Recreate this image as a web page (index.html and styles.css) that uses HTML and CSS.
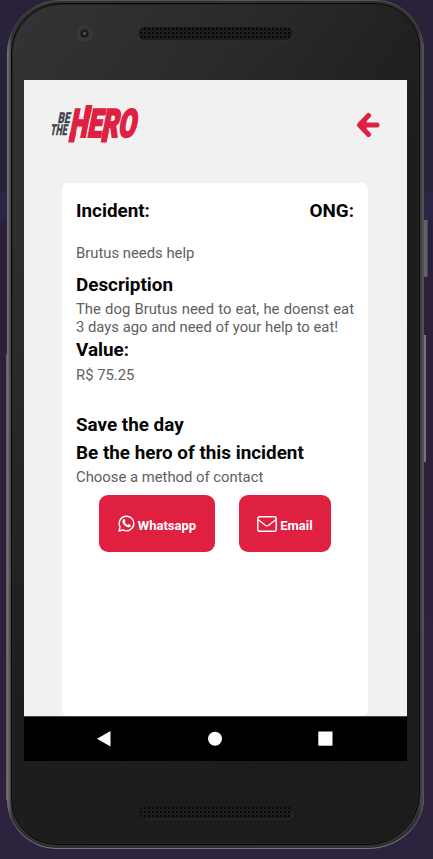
FILE: index.html
```html
<!DOCTYPE html>
<html lang="en">
<head>
<meta charset="utf-8">
<title>Be The Hero</title>
<link rel="stylesheet" href="styles.css">
</head>
<body>
<div class="phone">
  <i class="key power"></i><i class="key volume"></i><i class="key rail"></i>
  <div class="face">
    <div class="bezel top"><i class="camera"></i><i class="speaker"></i></div>
    <main class="screen">
      <header class="header">
        <svg class="logo" viewBox="0 0 90 42" role="img" aria-label="Be the Hero">
          <g transform="translate(0 34) skewX(-11)">
            <g class="small">
              <text x="4.500" y="-15.500" textLength="12" lengthAdjust="spacingAndGlyphs">BE</text>
              <text x="-.5" y="-3" textLength="16.500" lengthAdjust="spacingAndGlyphs">THE</text>
            </g>
            <g class="hero">
              <text x="18.500" y="-1" textLength="66.500" lengthAdjust="spacingAndGlyphs">HERO</text>
              <path d="M19-6h6V4.500h-6zM29.500-33h6.500V-20h-6.500zM51.500-8h6V4.500h-6z"/>
            </g>
          </g>
        </svg>
        <svg class="back" viewBox="0 0 24 26"><path d="M12.500 3.500 3.500 13l9 9.500M4.500 13H21" /><path class="fill" d="M4 13l6.500-6v12z"/></svg>
      </header>
      <section class="card">
        <div class="headings"><h2>Incident:</h2><h2>ONG:</h2></div>
        <p class="name"><span>Brutus needs help</span></p>
        <h2 class="desc-title">Description</h2>
        <p class="description">The dog Brutus need to eat, he doenst eat 3 days ago and need of your help to eat!</p>
        <h2 class="value-title">Value:</h2>
        <p class="value">R$ 75.25</p>
        <h2 class="save">Save the day</h2>
        <h2 class="be">Be the hero of this incident</h2>
        <p class="choose">Choose a method of contact</p>
        <div class="actions">
          <a class="button whatsapp">
            <svg width="17" height="17" viewBox="0 0 17 17"><path class="line" d="M1 16l1.100-4A7.300 7.300 0 1 1 5 14.900z"/><path class="solid" d="M5.500 4.300c.5-.5 1-.4 1.200.1l.7 1.500c.1.400-.5.900-.7 1.200.7 1.400 1.700 2.300 3.100 2.900l.9-1 1.900.9c.4.200.2 1-.1 1.500-.7.900-2 1-3.200.6-2.400-.8-4-2.500-4.800-4.600-.4-1.200.2-2.200 1-3.100z"/></svg>
            <span>Whatsapp</span>
          </a>
          <a class="button email">
            <svg width="20" height="16" viewBox="0 0 20 16"><rect class="line" x=".8" y=".8" width="18.400" height="14.400" rx="1.500"/><path class="line" d="M1 3.500c2.500 2 5 4 7.300 5.800q1.700 1.200 3.400 0C14 7.500 16.500 5.500 19 3.500"/></svg>
            <span>Email</span>
          </a>
        </div>
      </section>
      <nav class="navbar">
        <svg viewBox="0 0 383 44"><path d="M73 21.700 86.500 14v15.500z"/><circle cx="191" cy="21.700" r="7"/><rect x="294.300" y="14.500" width="14.200" height="14.200"/></svg>
      </nav>
    </main>
    <div class="bezel bottom"><i class="speaker"></i></div>
  </div>
</div>
</body>
</html>
```
FILE: styles.css
```css
* { box-sizing: border-box; }
body {
  margin: 0;
  height: 859px;
  overflow: hidden;
  font-family: Roboto, "Liberation Sans", sans-serif;
  background: linear-gradient(#29223a 0 192px, #2d2446 193px 220px, #2a2039 222px, #2d233f);
}
h2, p { margin: 0; }

.phone {
  position: relative;
  width: 417px;
  height: 849px;
  margin-left: 7px;
  padding: 3px 4px 4px 4px;
  border-radius: 54px 48px 56px 50px / 54px 52px 52px 50px;
  background: linear-gradient(90deg, #77777a 0, #5e5e60 2px, #303031 5px, #303031 411px, #3b3939 413px, #555 417px);
  box-shadow: inset 0 -1px #77757a, inset 0 1px #555;
}
.face {
  height: 842px;
  padding: 0 12px;
  border: 1px solid #090909;
  border-radius: 50px 45px 52px 46px;
  background: linear-gradient(125deg, #333435 0, #2a2a2a 25%, #1d1d1d 50%, #1c1c1d);
  box-shadow: inset 0 0 0 1px #242425;
}
.key { position: absolute; background: #626164; }
.power { left: 417px; top: 220px; width: 4px; height: 57px; border-right: 1px solid #4d4757; }
.volume { left: 417px; top: 335px; width: 2px; height: 127px; background: #77757b; }
.rail { left: -1px; top: 354px; width: 1px; height: 446px; }
.bezel { position: relative; height: 76px; display: flex; justify-content: center; }
.bezel.top { padding: 23px 0 0 0; }
.bezel.bottom { padding-top: 45px; }
.speaker {
  width: 153px;
  height: 13px;
  border-radius: 7px;
  background: radial-gradient(circle, #080808 0 .8px, transparent 1.1px) 0 0 / 4px 4px, #1c1c1c;
  box-shadow: 0 0 1px #111, 1px 1px 0 #303030;
}
.camera {
  position: absolute;
  left: 52px;
  top: 21px;
  width: 17px;
  height: 17px;
  border-radius: 50%;
  background: radial-gradient(circle, #55545c 0 1px, #1b1b20 2px 3.500px, #38383a 5px 8px);
}

.screen {
  width: 383px;
  height: 681px;
  display: flex;
  flex-direction: column;
  background: #f1f1f1;
}
.header {
  height: 103px;
  padding: 24px 26px 0 26px;
  display: flex;
  justify-content: space-between;
}
.logo { width: 90px; height: 42px; overflow: visible; }
.logo text { font-family: Roboto, sans-serif; font-weight: 900; }
.small { fill: #41414d; stroke: #41414d; stroke-width: .3px; }
.small text { font-size: 15px; }
.hero { fill: #e02041; }
.hero text { font-size: 39px; stroke: #e02041; stroke-width: 2px; }
.back { width: 24px; height: 26px; margin: 8px 1px 0 0; fill: none; stroke: #e02041; stroke-width: 5px; stroke-linecap: round; stroke-linejoin: round; }
.back .fill { fill: #e02041; stroke: none; }

.card {
  width: 306px;
  height: 533px;
  margin-left: 38px;
  padding: 15px 14px 0;
  border-radius: 6px;
  background: #fff;
}
.card h2 { font-size: 18.850px; line-height: 26px; font-weight: 700; color: #050505; white-space: nowrap; }
.card p { font-size: 14.830px; line-height: 18px; color: #606060; }
.headings { display: flex; justify-content: space-between; }
.card .name { margin-top: 20px; }
.card .desc-title { margin-top: 10px; }
.card .description { margin-top: 2px; text-align: justify; }
.card .value-title { margin-top: 1px; }
.card .value { margin-top: 3px; }
.card .save { margin-top: 28px; }
.card .be { margin-top: 2px; }
.card .choose { margin-top: 2px; }
.actions { display: flex; gap: 24px; margin: 9px 0 0 23px; }
.button {
  height: 57px;
  display: flex;
  align-items: center;
  justify-content: center;
  gap: 3px;
  border-radius: 9px;
  background: #e02041;
  color: #fff;
  font-size: 13px;
  font-weight: 700;
}
.button span { padding-top: 4px; }
.whatsapp { width: 116px; }
.email { width: 92px; }
.line { fill: none; stroke: #fff; stroke-width: 1.400px; stroke-linejoin: round; }
.solid { fill: #fff; }

.navbar { height: 45px; border-top: 1px solid #444; background: #000; }
.navbar svg { display: block; width: 383px; height: 44px; fill: #fff; }
```
